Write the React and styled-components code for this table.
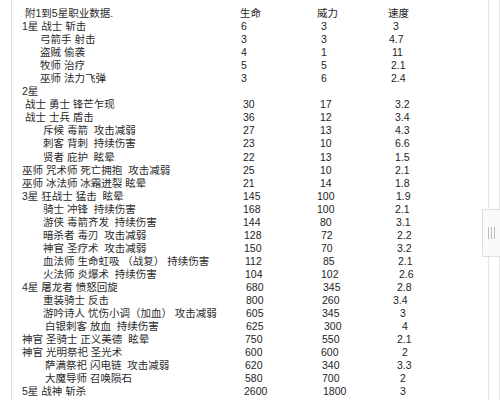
import React from 'react'
import styled, { createGlobalStyle } from 'styled-components'

const GlobalStyle = createGlobalStyle`
  html, body {
    margin: 0;
    padding: 0;
    background: #fff;
  }
  body {
    font-family: "Liberation Sans", "Noto Sans CJK SC", sans-serif;
    color: #222;
  }
`

// name, indent (px from sheet edge), life, power, speed, nudges [life, power, speed]
const rows = [
  ['1星 战士 斩击', 10, '6', '3', '3', [-2, 0, -2]],
  ['弓箭手 射击', 28, '3', '3', '4.7', [-2, 0, -6]],
  ['盗贼 偷袭', 28, '4', '1', '11', [-2, 0, -3]],
  ['牧师 治疗', 28, '5', '5', '2.1', [-2, 0, -4]],
  ['巫师 法力飞弹', 28, '3', '6', '2.4', [-2, 0, -4]],
  ['2星', 10],
  ['战士 勇士 锋芒乍现', 13, '30', '17', '3.2', [0, -1, 0]],
  ['战士 士兵 盾击', 13, '36', '12', '3.4', [0, -1, 0]],
  ['斥候 毒箭  攻击减弱', 31, '27', '13', '4.3', [0, -1, 0]],
  ['刺客 背刺  持续伤害', 31, '23', '10', '6.6', [0, -1, 0]],
  ['贤者 庇护  眩晕', 31, '22', '13', '1.5', [0, -1, 0]],
  ['巫师 咒术师 死亡拥抱  攻击减弱', 10, '25', '10', '2.1', [0, -1, 0]],
  ['巫师 冰法师 冰霜迸裂 眩晕', 10, '21', '14', '1.8', [0, -1, 0]],
  ['3星 狂战士 猛击  眩晕', 10, '145', '100', '1.9', [0, -4, 1]],
  ['骑士 冲锋  持续伤害', 31, '168', '100', '2.1', [0, -4, 0]],
  ['游侠 毒箭齐发  持续伤害', 31, '144', '80', '3.1', [0, -1, 1]],
  ['暗杀者 毒刃  攻击减弱', 31, '128', '72', '2.2', [1, 0, 2]],
  ['神官 圣疗术  攻击减弱', 31, '150', '70', '3.2', [1, 0, 2]],
  ['血法师 生命虹吸 （战复） 持续伤害', 31, '112', '85', '2.1', [2, 2, 3]],
  ['火法师 炎爆术  持续伤害', 31, '104', '102', '2.6', [2, 0, 4]],
  ['4星 屠龙者 愤怒回旋', 10, '680', '345', '2.8', [3, 2, 2]],
  ['重装骑士 反击', 31, '800', '260', '3.4', [3, 1, -2]],
  ['游吟诗人 忧伤小调（加血） 攻击减弱', 31, '605', '345', '3', [3, 1, 5]],
  ['白银刺客 放血  持续伤害', 33, '625', '300', '4', [3, 3, 7]],
  ['神官 圣骑士 正义美德  眩晕', 10, '750', '550', '2.1', [2, 1, 2]],
  ['神官 光明祭祀 圣光术', 10, '600', '600', '2', [2, 0, 7]],
  ['萨满祭祀 闪电链  攻击减弱', 33, '620', '340', '3.3', [2, 1, 2]],
  ['大魔导师 召唤陨石', 33, '580', '700', '2', [2, 1, 5]],
  ['5星 战神 斩杀', 10, '2600', '1800', '3', [1, 2, 5]],
]

const Page = styled.div`
  position: relative;
  height: 400px;
  overflow: hidden;
  padding-left: 11px;
`

const Sheet = styled.div`
  height: 100%;
  border-left: 1px solid #dcdcdc;
  padding-top: 7px;
  font-size: 10.5px;
  line-height: 13.05px;
  white-space: pre;
`

const Row = styled.div`
  display: grid;
  grid-template-columns: 231px 78px 74px 1fr;
  height: 13.05px;
`

const Name = styled.div`
  padding-left: ${p => p.$indent}px;
  color: #2a2a2a;
`

const Num = styled.div`
  margin-left: ${p => p.$dx || 0}px;
  color: #1e1e1e;
`

const Track = styled.div`
  position: absolute;
  top: 0;
  bottom: 0;
  left: 488px;
  width: 10px;
  border-left: 1px solid #e4e4e4;
  border-right: 1px solid #e4e4e4;
`

const Handle = styled.div`
  position: absolute;
  top: 209px;
  left: -7px;
  width: 17px;
  height: 46px;
  background: #fafafa;
  border: 1px solid #dedede;
  border-right: none;
  border-radius: 2px 0 0 2px;
  display: flex;
  align-items: center;
  justify-content: center;
  gap: 2px;
`

const Grip = styled.span`
  width: 1px;
  height: 12px;
  background: #bdbdbd;
`

export default function App() {
  return (
    <Page>
      <GlobalStyle />
      <Sheet>
        <Row>
          <Name $indent={13}>附1到5星职业数据.</Name>
          <Num $dx={-3}>生命</Num>
          <Num $dx={-4}>威力</Num>
          <Num $dx={-7}>速度</Num>
        </Row>
        {rows.map(([name, indent, life, power, speed, dx = []], i) => (
          <Row key={i}>
            <Name $indent={indent}>{name}</Name>
            <Num $dx={dx[0]}>{life}</Num>
            <Num $dx={dx[1]}>{power}</Num>
            <Num $dx={dx[2]}>{speed}</Num>
          </Row>
        ))}
      </Sheet>
      <Track>
        <Handle>
          <Grip />
          <Grip />
          <Grip />
        </Handle>
      </Track>
    </Page>
  )
}
